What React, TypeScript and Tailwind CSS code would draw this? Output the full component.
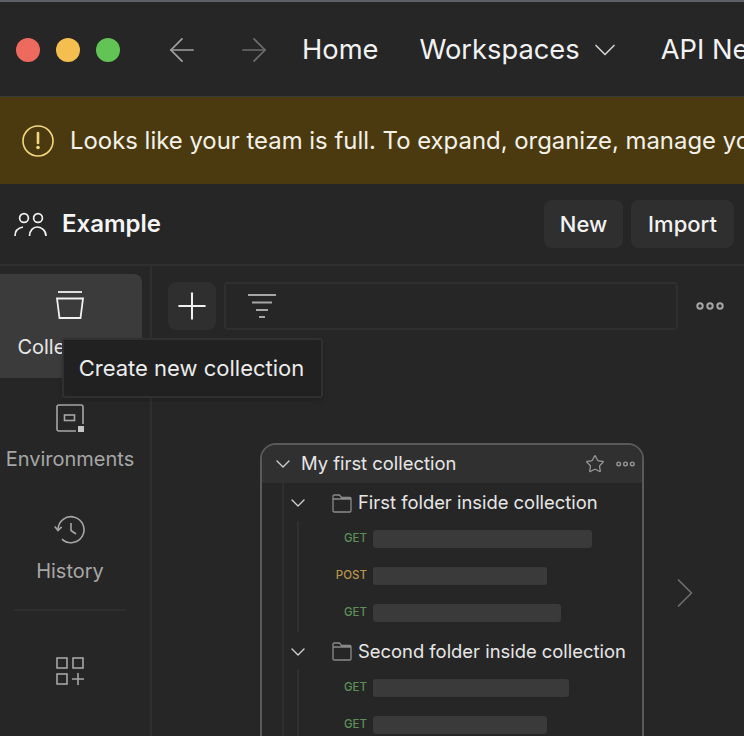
import React from 'react';
import { ChevronDown, ArrowLeft, ArrowRight, Plus, Star, ChevronRight } from 'lucide-react';

const Dots = ({ className }: { className?: string }) => (
  <svg viewBox="0 0 28 8" fill="none" stroke="currentColor" strokeWidth="2" className={className}>
    <circle cx="4" cy="4" r="2.7" />
    <circle cx="14" cy="4" r="2.7" />
    <circle cx="24" cy="4" r="2.7" />
  </svg>
);

const FolderIcon = () => (
  <svg viewBox="0 0 20 19" fill="none" stroke="#8a8a8a" strokeWidth="1.3" className="w-5 h-[19px] shrink-0">
    <path d="M1 5V2.2C1 1.5 1.5 1 2.2 1H7.5L9.5 3.5H18C18.6 3.5 19 4 19 4.6V16.8C19 17.5 18.5 18 17.8 18H2.2C1.5 18 1 17.5 1 16.8V5H19" />
  </svg>
);

const rows = [
  {
    name: 'First folder inside collection',
    items: [
      { method: 'GET', bar: 'w-[219px]' },
      { method: 'POST', bar: 'w-[174px]' },
      { method: 'GET', bar: 'w-[188px]' },
    ],
  },
  {
    name: 'Second folder inside collection',
    items: [
      { method: 'GET', bar: 'w-[196px]' },
      { method: 'GET', bar: 'w-[174px]' },
    ],
  },
];

const NavItem = ({ icon, label }: { icon: React.ReactNode; label: string }) => (
  <div className="flex flex-col items-center w-[140px] h-[112px] pt-[26px]">
    {icon}
    <span className="mt-[13px] text-[20px] leading-[28px] text-[#a6a6a6] whitespace-nowrap">{label}</span>
  </div>
);

export default function App() {
  return (
    <div className="relative w-[744px] h-[736px] overflow-hidden bg-[#262626] text-white font-['Inter',sans-serif]">
      <div className="h-[97px] pt-[2px] border-t-2 border-t-[#5c6066] border-b border-b-[#3a3a3a] flex items-center pl-4 whitespace-nowrap">
        <span className="w-6 h-6 shrink-0 rounded-full bg-[#ee6a5f]" />
        <span className="w-6 h-6 shrink-0 rounded-full bg-[#f5bf4f] ml-4" />
        <span className="w-6 h-6 shrink-0 rounded-full bg-[#61c454] ml-4" />
        <ArrowLeft className="w-[38px] h-[38px] shrink-0 ml-[43px] text-[#a0a0a0]" strokeWidth={1.1} />
        <ArrowRight className="w-[38px] h-[38px] shrink-0 ml-[34px] text-[#6c6c6c]" strokeWidth={1.1} />
        <span className="ml-[29px] text-[27.3px] text-[#f2f2f2]">Home</span>
        <span className="ml-[41px] text-[27.3px] text-[#f2f2f2]">Workspaces</span>
        <ChevronDown className="w-9 h-9 shrink-0 ml-[7px] text-[#d0d0d0]" strokeWidth={1.1} />
        <span className="ml-[38px] text-[27.3px] text-[#f2f2f2]">API Network</span>
      </div>

      <div className="h-[87px] bg-[#4b3a10] flex items-center pl-[22px] whitespace-nowrap">
        <svg viewBox="0 0 32 32" fill="none" className="w-8 h-8 shrink-0">
          <circle cx="16" cy="16" r="15" stroke="#f3d77e" strokeWidth="1.6" />
          <path d="M16 8v10" stroke="#f3d77e" strokeWidth="2.6" strokeLinecap="round" />
          <circle cx="16" cy="22.5" r="1.8" fill="#f3d77e" />
        </svg>
        <span className="ml-4 text-[23.9px] text-[#f4f1e8]">
          Looks like your team is full. To expand, organize, manage your team, upgrade your plan.
        </span>
      </div>

      <div className="h-[82px] border-b-2 border-[#2f2f2f] flex items-center pl-[14px] pr-[10px]">
        <svg viewBox="0 0 34 26" fill="none" stroke="#f0f0f0" strokeWidth="1.7" className="w-[34px] h-[26px]">
          <circle cx="10" cy="7" r="4.4" />
          <circle cx="24" cy="7" r="4.4" />
          <path d="M1 25c0-5 2.5-8 8-9" />
          <path d="M12.5 25c0-5.5 4-9 7.5-9s9 2.5 9 9" transform="translate(3 0)" />
        </svg>
        <span className="ml-[14px] text-[24px] font-semibold text-[#f5f5f5]">Example</span>
        <button className="ml-auto h-12 w-[79px] rounded-lg bg-[#2f2f2f] text-[22px] font-medium text-[#f2f2f2]">New</button>
        <button className="ml-2 h-12 w-[103px] rounded-lg bg-[#2f2f2f] text-[22px] font-medium text-[#f2f2f2]">Import</button>
      </div>

      <div className="flex h-[470px]">
        <aside className="w-[152px] shrink-0 border-r-2 border-[#2f2f2f] pt-2">
          <div className="h-[104px] w-[142px] pr-[2px] rounded-r-lg bg-[#3b3b3b] flex flex-col items-center pt-[17px]">
            <svg viewBox="0 0 30 29" fill="none" stroke="#f0f0f0" strokeWidth="1.8" className="w-[30px] h-[29px]">
              <path d="M3 1h24" />
              <path d="M2 7.5h26L25.5 27h-21z" />
            </svg>
            <span className="mt-[13px] text-[20px] leading-[28px] text-[#e8e8e8]">Collections</span>
          </div>
          <NavItem
            icon={
              <svg viewBox="0 0 28 28" fill="none" stroke="#a6a6a6" strokeWidth="1.6" className="w-7 h-7">
                <path d="M27 20V3a2 2 0 0 0-2-2H3a2 2 0 0 0-2 2v22a2 2 0 0 0 2 2h17" />
                <rect x="8.5" y="11" width="10" height="5.5" />
                <rect x="22" y="22" width="6" height="6" fill="#c4c4c4" stroke="none" />
              </svg>
            }
            label="Environments"
          />
          <NavItem
            icon={
              <svg viewBox="0 0 32 29" fill="none" stroke="#a6a6a6" strokeWidth="1.6" className="w-8 h-[29px] -mt-[1px]">
                <path d="M4 14.5a13 13 0 1 1 4 9.6" />
                <path d="M0.8 11.5 4 15.5l3.6-3.6" />
                <path d="M17 8v7.5l5 3.5" />
              </svg>
            }
            label="History"
          />
          <div className="h-0.5 ml-[14px] w-[112px] bg-[#2f2f2f] mt-[7px]" />
          <div className="flex justify-center w-[140px] pt-[46px]">
            <svg viewBox="0 0 28 28" fill="none" stroke="#a6a6a6" strokeWidth="1.6" className="w-7 h-7">
              <rect x="1" y="1" width="10" height="10" />
              <rect x="17" y="1" width="10" height="10" />
              <rect x="1" y="17" width="10" height="10" />
              <path d="M16 22h12M22 16v12" />
            </svg>
          </div>
        </aside>

        <main className="flex-1 min-w-0 relative">
          <div className="flex items-center h-12 mt-4 ml-4">
            <button className="w-12 h-12 rounded-lg bg-[#2f2f2f] flex items-center justify-center">
              <Plus className="w-11 h-11 shrink-0 text-[#f0f0f0]" strokeWidth={1.1} />
            </button>
            <div className="ml-2 w-[454px] h-12 border-2 border-[#2f2f2f] rounded-sm flex items-center pl-[22px]">
              <svg viewBox="0 0 28 24" fill="none" stroke="#a6a6a6" strokeWidth="1.8" className="w-7 h-6">
                <path d="M0 1h28M4 8.5h20M8 16h12M11 23h6" />
              </svg>
            </div>
            <Dots className="ml-[18px] w-7 h-2 text-[#a6a6a6]" />
          </div>

          <div className="flex mt-[113px] ml-[108px]">
            <div className="w-[384px] h-[400px] shrink-0 border-2 border-[#5a5a5a] rounded-t-2xl overflow-hidden">
              <div className="h-[38px] bg-[#303030] flex items-center pl-[9px] pr-[7px]">
                <ChevronDown className="w-6 h-6 shrink-0 text-[#cfcfcf]" strokeWidth={1.4} />
                <span className="ml-[6px] text-[18.4px] text-[#e6e6e6]">My first collection</span>
                <Star className="ml-auto w-5 h-5 text-[#9a9a9a]" strokeWidth={1.5} />
                <Dots className="ml-[11px] w-[19px] h-[6px] text-[#9a9a9a]" />
              </div>
              <div className="ml-[20px] border-l-2 border-[#2f2f2f] min-h-full">
                {rows.map((folder) => (
                  <div key={folder.name}>
                    <div className="h-[37.5px] pt-[3px] flex items-center pl-[2px]">
                      <ChevronDown className="w-6 h-6 shrink-0 text-[#cfcfcf]" strokeWidth={1.4} />
                      <span className="ml-[22px]"><FolderIcon /></span>
                      <span className="ml-[6px] text-[18.4px] whitespace-nowrap text-[#e6e6e6]">{folder.name}</span>
                    </div>
                    <div className="ml-[13px] border-l-2 border-[#2f2f2f]">
                      {folder.items.map((item, i) => (
                        <div key={i} className="h-[37px] flex items-center">
                          <span
                            className={`w-[68px] text-right text-[11.5px] font-medium ${
                              item.method === 'GET' ? 'text-[#5c8f58]' : 'text-[#b8954d]'
                            }`}
                          >
                            {item.method}
                          </span>
                          <span className={`ml-[6px] h-[18px] rounded-[3px] bg-[#3a3a3a] ${item.bar}`} />
                        </div>
                      ))}
                    </div>
                  </div>
                ))}
              </div>
            </div>
            <ChevronRight className="ml-[15px] mt-[124px] w-[52px] h-[52px] shrink-0 text-[#6e6e6e]" strokeWidth={0.8} />
          </div>
        </main>
      </div>

      <div className="absolute left-[62px] top-[338px] w-[261px] h-[60px] pr-[2px] bg-[#212121] border-2 border-[#303030] rounded-[3px] flex items-center justify-center text-[22px] text-[#ececec] whitespace-nowrap shadow-md">
        Create new collection
      </div>
    </div>
  );
}
